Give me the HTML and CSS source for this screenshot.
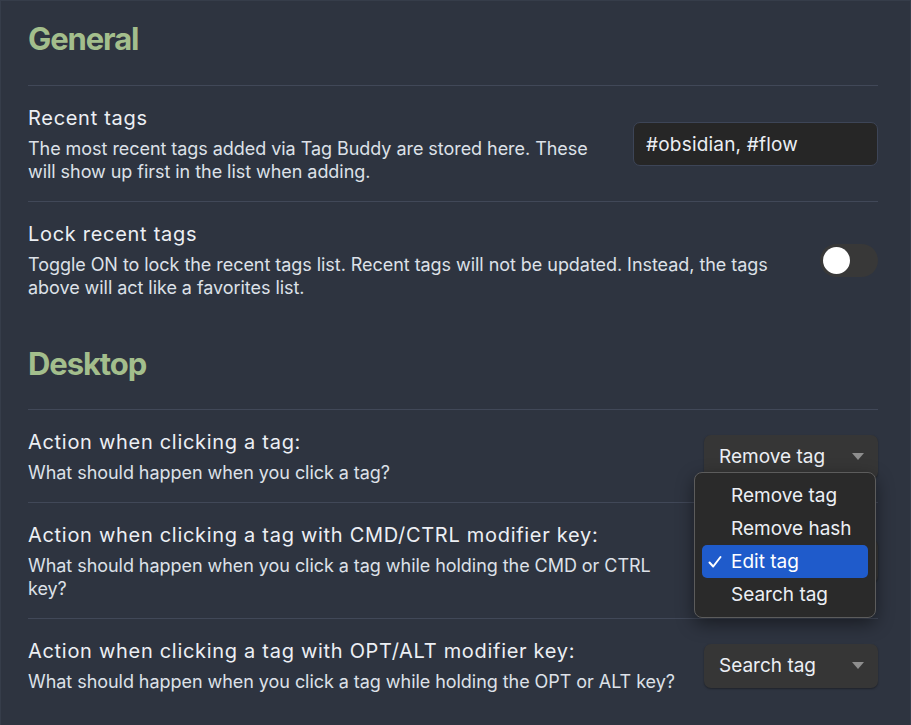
FILE: index.html
```html
<!DOCTYPE html>
<html lang="en">
<head>
<meta charset="utf-8">
<title>Tag Buddy settings</title>
<link rel="stylesheet" href="styles.css">
</head>
<body>
<div class="page">
  <h2 class="section-heading first">General</h2>

  <div class="setting">
    <div class="info">
      <div class="name">Recent tags</div>
      <div class="desc">The most recent tags added via Tag Buddy are stored here. These will show up first in the list when adding.</div>
    </div>
    <div class="control">
      <input class="text-input" type="text" value="#obsidian, #flow">
    </div>
  </div>

  <div class="setting">
    <div class="info">
      <div class="name">Lock recent tags</div>
      <div class="desc">Toggle ON to lock the recent tags list. Recent tags will not be updated. Instead, the tags above will act like a favorites list.</div>
    </div>
    <div class="control">
      <div class="toggle"><div class="knob"></div></div>
    </div>
  </div>

  <h2 class="section-heading">Desktop</h2>

  <div class="setting">
    <div class="info">
      <div class="name">Action when clicking a tag:</div>
      <div class="desc">What should happen when you click a tag?</div>
    </div>
    <div class="control">
      <div class="dropdown"><span>Remove tag</span><span class="arrow"></span></div>
    </div>
  </div>

  <div class="setting">
    <div class="info">
      <div class="name">Action when clicking a tag with CMD/CTRL modifier key:</div>
      <div class="desc">What should happen when you click a tag while holding the CMD or CTRL key?</div>
    </div>
    <div class="control">
      <div class="dropdown covered"><span>Edit tag</span><span class="arrow"></span></div>
    </div>
  </div>

  <div class="setting">
    <div class="info">
      <div class="name">Action when clicking a tag with OPT/ALT modifier key:</div>
      <div class="desc">What should happen when you click a tag while holding the OPT or ALT key?</div>
    </div>
    <div class="control">
      <div class="dropdown"><span>Search tag</span><span class="arrow"></span></div>
    </div>
  </div>

  <div class="menu">
    <div class="menu-item">Remove tag</div>
    <div class="menu-item">Remove hash</div>
    <div class="menu-item selected"><svg class="check" viewBox="0 0 14 14" width="14" height="14"><path d="M1.5 7.5 L5.2 11.5 L12.5 2" fill="none" stroke="#ffffff" stroke-width="2" stroke-linecap="round" stroke-linejoin="round"/></svg>Edit tag</div>
    <div class="menu-item">Search tag</div>
  </div>
</div>
</body>
</html>
```

FILE: styles.css
```css
* { box-sizing: border-box; }

html, body {
  margin: 0;
  padding: 0;
  background: #2e3440;
}

body {
  font-family: Inter, "Noto Sans", sans-serif;
  color: #eceff4;
  border-top: 1px solid #363d4a;
  border-left: 1px solid #363d4a;
  border-right: 1px solid #363d4a;
  min-height: 725px;
}

.page {
  position: relative;
  padding: 0 32px 0 27px;
}

.section-heading {
  margin: 0;
  padding: 28px 0 26px;
  font-size: 31px;
  line-height: 38px;
  font-weight: 700;
  color: #a3be8c;
  letter-spacing: -1.1px;
  border-bottom: 1px solid #414858;
}

.section-heading.first {
  padding-top: 19px;
  padding-bottom: 27px;
}

.setting {
  display: flex;
  align-items: center;
  gap: 24px;
  padding: 19px 0 18px;
}

.setting + .setting {
  border-top: 1px solid #414858;
}

.info {
  flex: 1;
  min-width: 0;
}

.name {
  font-size: 20px;
  line-height: 26px;
  letter-spacing: 0.7px;
  color: #eceff4;
}

.desc {
  margin-top: 6px;
  font-size: 18px;
  line-height: 23px;
  letter-spacing: -0.05px;
  color: #dde1e8;
}

.control {
  flex: none;
  display: flex;
  justify-content: flex-end;
}

.text-input {
  width: 245px;
  height: 44px;
  padding: 0 12px;
  background: #262626;
  border: 1px solid #3d4557;
  border-radius: 7px;
  color: #eceff4;
  font-family: Inter, "Noto Sans", sans-serif;
  font-size: 19px;
  letter-spacing: 0.2px;
  outline: none;
}

.toggle {
  width: 58px;
  height: 33px;
  border-radius: 17px;
  background: #383838;
  padding: 3px;
}

.knob {
  width: 27px;
  height: 27px;
  border-radius: 50%;
  background: #ffffff;
}

.dropdown {
  display: flex;
  align-items: center;
  justify-content: space-between;
  width: 174px;
  height: 44px;
  padding: 0 14px 0 15px;
  background: #363636;
  border-radius: 7px;
  box-shadow: 0 1px 2px rgba(0, 0, 0, 0.35);
  font-size: 19px;
  color: #eceff4;
}

.dropdown.covered span:first-child {
  visibility: hidden;
}

.arrow {
  width: 0;
  height: 0;
  border-left: 6px solid transparent;
  border-right: 6px solid transparent;
  border-top: 7px solid #8e8e8e;
}

.menu {
  position: absolute;
  left: 693px;
  top: 471px;
  width: 182px;
  padding: 6px 7px;
  background: #2a2a2a;
  border: 1px solid #5c5c5c;
  border-radius: 8px;
  box-shadow: 0 6px 18px rgba(0, 0, 0, 0.45);
}

.menu-item {
  position: relative;
  height: 33px;
  line-height: 33px;
  padding-left: 29px;
  font-size: 19px;
  color: #eceff4;
  border-radius: 5px;
}

.menu-item.selected {
  background: #1f5bcb;
  color: #ffffff;
}

.check {
  position: absolute;
  left: 6px;
  top: 10px;
}
```
